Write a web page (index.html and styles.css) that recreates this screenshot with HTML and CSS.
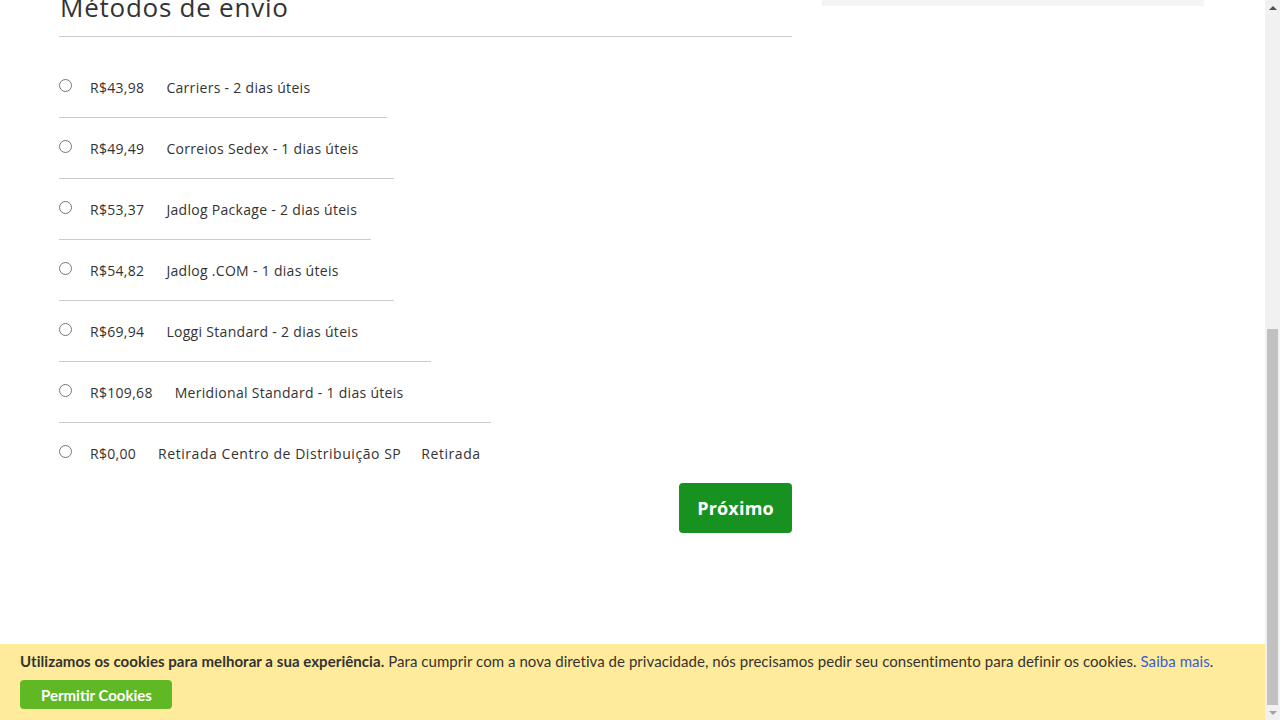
FILE: index.html
```html
<!DOCTYPE html>
<html lang="pt-BR">
<head>
<meta charset="utf-8">
<title>Métodos de envio</title>
<link rel="stylesheet" href="styles.css">
</head>
<body>
<div class="viewport">
  <main class="page">
    <div class="content">
      <section class="shipping">
        <h2 class="title">Métodos de envio</h2>
        <ul class="options">
          <li class="option" style="width:328px"><label class="opt-label"><input type="radio" name="ship" class="radio"><span class="price">R$43,98</span><span class="name">Carriers - 2 dias úteis</span></label></li>
          <li class="option" style="width:335px"><label class="opt-label"><input type="radio" name="ship" class="radio"><span class="price">R$49,49</span><span class="name">Correios Sedex - 1 dias úteis</span></label></li>
          <li class="option" style="width:312px"><label class="opt-label"><input type="radio" name="ship" class="radio"><span class="price">R$53,37</span><span class="name">Jadlog Package - 2 dias úteis</span></label></li>
          <li class="option" style="width:335px"><label class="opt-label"><input type="radio" name="ship" class="radio"><span class="price">R$54,82</span><span class="name">Jadlog .COM - 1 dias úteis</span></label></li>
          <li class="option" style="width:372px"><label class="opt-label"><input type="radio" name="ship" class="radio"><span class="price">R$69,94</span><span class="name">Loggi Standard - 2 dias úteis</span></label></li>
          <li class="option" style="width:432px"><label class="opt-label"><input type="radio" name="ship" class="radio"><span class="price">R$109,68</span><span class="name">Meridional Standard - 1 dias úteis</span></label></li>
          <li class="option option-last"><label class="opt-label"><input type="radio" name="ship" class="radio"><span class="price">R$0,00</span><span class="name">Retirada Centro de Distribuição SP</span><span class="name">Retirada</span></label></li>
        </ul>
        <div class="actions"><button type="button" class="btn-next">Próximo</button></div>
      </section>
      <aside class="sidebar"><div class="summary-box"></div></aside>
    </div>
  </main>
  <div class="scrollbar">
    <div class="sb-arrow sb-up"></div>
    <div class="sb-track"><div class="sb-thumb"></div></div>
    <div class="sb-arrow sb-down"></div>
  </div>
</div>
<div class="cookie-bar">
  <p class="cookie-text"><strong>Utilizamos os cookies para melhorar a sua experiência.</strong> Para cumprir com a nova diretiva de privacidade, nós precisamos pedir seu consentimento para definir os cookies. <a href="#" class="cookie-link">Saiba mais</a>.</p>
  <button type="button" class="btn-cookies">Permitir Cookies</button>
</div>
</body>
</html>
```
FILE: styles.css
```css
html, body {
  margin: 0;
  padding: 0;
  height: 720px;
  overflow: hidden;
  background: #fff;
}
body {
  font-family: "Open Sans", "Noto Sans", sans-serif;
  color: #333;
}
.viewport {
  display: flex;
  height: 720px;
}
.page {
  flex: 1;
  overflow: hidden;
}
.content {
  display: flex;
  gap: 30px;
  padding-left: 59px;
}
.shipping {
  width: 733px;
}
.title {
  margin: -9px 0 0 0;
  padding: 0 0 0 1px;
  height: 46px;
  box-sizing: border-box;
  font-size: 26px;
  font-weight: 400;
  letter-spacing: 0.75px;
  line-height: 32px;
  color: #333;
  border-bottom: 1px solid #ccc;
}
.options {
  list-style: none;
  margin: 20px 0 0 0;
  padding: 0;
}
.option {
  height: 61px;
  box-sizing: border-box;
  border-bottom: 1px solid #ccc;
}
.option-last {
  border-bottom: none;
  height: 60px;
  width: auto;
}
.opt-label {
  display: flex;
  align-items: center;
  height: 60px;
  font-size: 14px;
  letter-spacing: 0.3px;
  white-space: nowrap;
}
.radio {
  width: 13px;
  height: 13px;
  margin: 0 18px 0 0;
  position: relative;
  top: -2px;
}
.price {
  margin-right: 22px;
}
.name {
  margin-right: 20px;
}
.option-last .name {
  letter-spacing: 0.55px;
}
.actions {
  display: flex;
  justify-content: flex-end;
}
.btn-next {
  width: 113px;
  height: 50px;
  border: none;
  border-radius: 4px;
  background: #17911f;
  color: #fff;
  font-family: inherit;
  font-size: 18px;
  font-weight: 700;
  letter-spacing: 0.2px;
  cursor: pointer;
}
.sidebar {
  width: 382px;
}
.summary-box {
  height: 6px;
  background: #f4f4f4;
}
.scrollbar {
  width: 15px;
  background: #f1f1f1;
  display: flex;
  flex-direction: column;
}
.sb-arrow {
  height: 15px;
  display: flex;
  justify-content: center;
  align-items: center;
}
.sb-up::before {
  content: "";
  border-left: 4px solid transparent;
  border-right: 4px solid transparent;
  border-bottom: 4px solid #505050;
}
.sb-down::before {
  content: "";
  border-left: 4px solid transparent;
  border-right: 4px solid transparent;
  border-top: 4px solid #a3a3a3;
}
.sb-track {
  flex: 1;
  display: flex;
  flex-direction: column;
  padding: 0 2px;
}
.sb-thumb {
  margin-top: auto;
  height: 376px;
  background: #c1c1c1;
}
.cookie-bar {
  position: fixed;
  left: 0;
  bottom: 0;
  width: 1265px;
  height: 76px;
  box-sizing: border-box;
  padding: 7px 20px 0 20px;
  background: #ffeb9b;
  font-family: "Lato", "Open Sans", sans-serif;
}
.cookie-text {
  margin: 0 0 9px 0;
  font-size: 15px;
  letter-spacing: 0.055px;
  line-height: 20px;
  color: #333;
}
.cookie-link {
  color: #3a5bd9;
  text-decoration: none;
}
.btn-cookies {
  height: 29px;
  padding: 0 20px 0 21px;
  border: none;
  border-radius: 4px;
  background: #5fb824;
  color: #fff;
  font-family: inherit;
  font-size: 15px;
  font-weight: 700;
}
```
